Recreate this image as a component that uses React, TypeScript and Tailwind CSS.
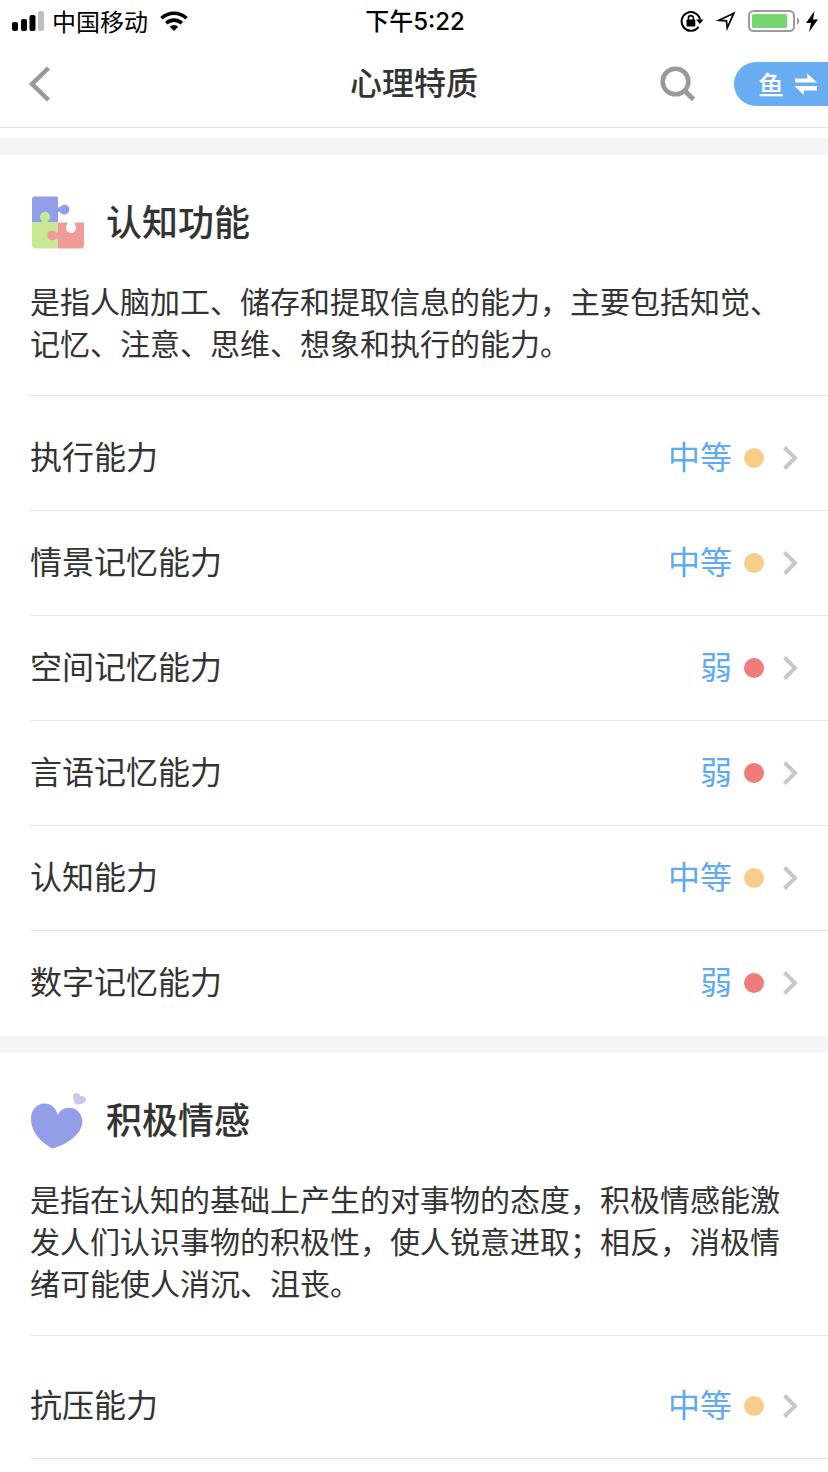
import type { ReactNode } from 'react'

type Level = 'medium' | 'weak'

type Trait = {
  name: string
  level: Level
}

type TraitGroup = {
  id: string
  title: string
  icon: ReactNode
  description: string
  listClass: string
  traits: Trait[]
}

const levels: Record<Level, { label: string; dot: string }> = {
  medium: { label: '中等', dot: 'bg-[#f7cd8a]' },
  weak: { label: '弱', dot: 'bg-[#ef7c79]' },
}

function PuzzleIcon() {
  return (
    <svg viewBox="0 0 56 56" className="size-14 shrink-0" aria-hidden="true">
      <path
        fill="#929ee8"
        d="M5 1.500h21.500a1.500 1.500 0 0 1 1.500 1.500v9.300c.8.500 1.600.300 2.200-.500a5 5 0 1 1 0 5.600c-.6-.8-1.400-1-2.200-.500V27.500H2V4.500a3 3 0 0 1 3-3z"
      />
      <path
        fill="#c8e993"
        d="M2 27.500h9.800c.6-.8.300-1.600-.5-2.300a5 5 0 1 1 7.400 0c-.8.700-1.100 1.500-.5 2.300H28v26H5a3 3 0 0 1-3-3z"
      />
      <path
        fill="#f09b97"
        d="M28 27.500h8.800c.8.500.8 1.500.2 2.300a5 5 0 1 0 8 0c-.6-.8-.6-1.800.2-2.300H54v23a3 3 0 0 1-3 3H28v-9.800c-.8-.6-1.600-.300-2.200.300a5 5 0 1 1 0-7c.6.600 1.400.900 2.200.300z"
      />
    </svg>
  )
}

function HeartIcon() {
  return (
    <svg viewBox="0 0 56 56" className="size-14 shrink-0" aria-hidden="true">
      <path
        fill="#929ee8"
        d="M22.300 55.500C13 50 1 41 1 25.500C1 17 7 10.500 14.500 10.500C21 10.500 26 15 27.700 21.800C30 17.500 34 14.700 39 14.700C46.500 14.700 52.300 20.500 52.300 28.500C52.300 41.500 36 52 22.300 55.500z"
      />
      <path
        fill="#cfc5ec"
        d="M45.800 11.600C44 8.500 43 6 43 3.500C43 1.200 44.500 0 46.500 0C48.700 0 50 1.500 50.300 3.300C53 2.300 56 3.800 56 6.600C56 10.500 50.500 11.600 45.800 11.600z"
      />
    </svg>
  )
}

const groups: TraitGroup[] = [
  {
    id: 'cognition',
    title: '认知功能',
    icon: <PuzzleIcon />,
    description:
      '是指人脑加工、储存和提取信息的能力，主要包括知觉、记忆、注意、思维、想象和执行的能力。',
    listClass: 'pt-2.5 [&>li:last-child]:border-transparent',
    traits: [
      { name: '执行能力', level: 'medium' },
      { name: '情景记忆能力', level: 'medium' },
      { name: '空间记忆能力', level: 'weak' },
      { name: '言语记忆能力', level: 'weak' },
      { name: '认知能力', level: 'medium' },
      { name: '数字记忆能力', level: 'weak' },
    ],
  },
  {
    id: 'emotion',
    title: '积极情感',
    icon: <HeartIcon />,
    description:
      '是指在认知的基础上产生的对事物的态度，积极情感能激发人们认识事物的积极性，使人锐意进取；相反，消极情绪可能使人消沉、沮丧。',
    listClass: 'pt-[18px]',
    traits: [{ name: '抗压能力', level: 'medium' }],
  },
]

function StatusBar() {
  return (
    <div className="grid h-10 grid-cols-[1fr_auto_1fr] items-center pr-2.5 pl-3 font-['Noto_Sans_CJK_SC',sans-serif] text-2xl leading-10 text-black">
      <div className="flex items-center">
        <svg viewBox="0 0 32 20" className="h-5 w-8" aria-hidden="true">
          <rect x="0" y="11" width="6" height="9" rx="2" />
          <rect x="9" y="8" width="6" height="12" rx="2" />
          <rect x="17.500" y="4" width="6" height="16" rx="2" />
          <rect x="26" y="0" width="6" height="20" rx="2" fill="#bfbfbf" />
        </svg>
        <span className="ml-2">中国移动</span>
        <svg viewBox="0 0 28 20" className="ml-3 h-5 w-7" aria-hidden="true">
          <g fill="none" stroke="#000" strokeWidth="3.600">
            <path d="M1.500 7.300a18 18 0 0 1 25 0" />
            <path d="M6.200 12.200a11.300 11.300 0 0 1 15.600 0" />
          </g>
          <path d="M14 20l-4.200-4.300a6.200 6.200 0 0 1 8.400 0z" />
        </svg>
      </div>

      <span className="font-medium">
        下午<span className="font-[Inter,sans-serif]">5:22</span>
      </span>

      <div className="flex items-center justify-end">
        <svg viewBox="0 0 24 22" className="h-[22px] w-6" aria-hidden="true">
          <path
            d="M18.500 16.800A9.300 9.300 0 1 1 20 9.500"
            fill="none"
            stroke="#000"
            strokeWidth="2"
          />
          <path d="M16 9.500h7.500l-3.700 4.500z" />
          <rect x="6.500" y="9.500" width="8.800" height="7" rx="1" />
          <path
            d="M8.400 10.500V8.100a2.500 2.500 0 0 1 5 0v2.400"
            fill="none"
            stroke="#000"
            strokeWidth="1.600"
          />
        </svg>
        <svg viewBox="0 0 20 20" className="ml-3 size-5" aria-hidden="true">
          <path
            d="M17.800 2.200L3 9.300l7.500.5.700 7.200z"
            fill="none"
            stroke="#000"
            strokeWidth="1.700"
            strokeLinejoin="miter"
            strokeMiterlimit="10"
          />
        </svg>
        <svg viewBox="0 0 52 22" className="ml-3 h-[22px] w-[52px]" aria-hidden="true">
          <rect
            x="1"
            y="1"
            width="45"
            height="20"
            rx="4.500"
            fill="none"
            stroke="#9b9b9b"
            strokeWidth="2"
          />
          <rect x="4" y="4" width="35" height="14" rx="1.500" fill="#76d672" />
          <path d="M49 7.500c3 1 3 6 0 7z" fill="#9b9b9b" />
        </svg>
        <svg viewBox="0 0 12 21" className="ml-1.5 h-[21px] w-3" aria-hidden="true">
          <path d="M8.500 0L0 12h5L3 21l9-12.500H7z" />
        </svg>
      </div>
    </div>
  )
}

function NavBar() {
  return (
    <nav className="grid h-22 grid-cols-[1fr_auto_1fr] items-center border-b border-[#e4e4e4]">
      <div className="pl-7">
        <button type="button" aria-label="返回" className="block">
          <svg viewBox="0 0 24 36" className="h-9 w-6" aria-hidden="true">
            <path d="M20.500 2L4 18l16.500 16" fill="none" stroke="#999" strokeWidth="4.500" />
          </svg>
        </button>
      </div>

      <h1 className="text-[32px] font-medium">心理特质</h1>

      <div className="flex items-center justify-end">
        <button type="button" aria-label="搜索" className="mr-9">
          <svg viewBox="0 0 38 36" className="h-9 w-[38px]" aria-hidden="true">
            <g fill="none" stroke="#999">
              <circle cx="15.500" cy="15.500" r="12.800" strokeWidth="4.600" />
              <path d="M24.500 24.500l9 9" strokeWidth="5" />
            </g>
          </svg>
        </button>
        <button
          type="button"
          className="flex h-11 items-center gap-2.5 rounded-l-full bg-[#68adf2] pr-2.5 pl-6 font-['Noto_Sans_CJK_SC',sans-serif] text-[26px] font-medium text-white"
        >
          鱼
          <svg viewBox="0 0 24 22" className="h-[22px] w-6" aria-hidden="true">
            <g fill="currentColor">
              <path d="M1 5.500h12.500l-.5-5.300L23 9.500H1z" />
              <path d="M23 13H.5l9.300 9 .2-4.500h13z" />
            </g>
          </svg>
        </button>
      </div>
    </nav>
  )
}

function TraitRow({ name, level }: Trait) {
  const { label, dot } = levels[level]

  return (
    <li className="border-b border-[#e8e8e4]">
      <a href="#trait" className="flex h-26 items-center pr-[30px] text-[32px]">
        <span className="flex-1">{name}</span>
        <span className="text-[#5eaaf5]">{label}</span>
        <span className={`ml-3 size-5 rounded-full ${dot}`} />
        <svg viewBox="0 0 16 24" className="ml-[18px] h-6 w-4" aria-hidden="true">
          <path d="M2.500 1.500L13 12L2.500 22.500" fill="none" stroke="#c8c8c8" strokeWidth="4" />
        </svg>
      </a>
    </li>
  )
}

function TraitSection({ group }: { group: TraitGroup }) {
  return (
    <section className="border-t-[17px] border-[#f4f5f7] pt-10 pl-[30px] last:pb-3">
      <div className="flex items-center gap-5">
        {group.icon}
        <h2 className="text-4xl font-medium">{group.title}</h2>
      </div>
      <p className="mt-[30px] pr-[30px] text-3xl leading-[42px]">{group.description}</p>
      <ul className={`mt-[30px] border-t border-[#e8e8e4] ${group.listClass}`}>
        {group.traits.map((trait) => (
          <TraitRow key={trait.name} {...trait} />
        ))}
      </ul>
    </section>
  )
}

export default function App() {
  return (
    <div className="min-h-screen bg-white font-[Inter,'Noto_Sans_CJK_SC',sans-serif] text-[#333]">
      <header>
        <StatusBar />
        <NavBar />
      </header>
      <main className="pt-2.5">
        {groups.map((group) => (
          <TraitSection key={group.id} group={group} />
        ))}
      </main>
    </div>
  )
}
